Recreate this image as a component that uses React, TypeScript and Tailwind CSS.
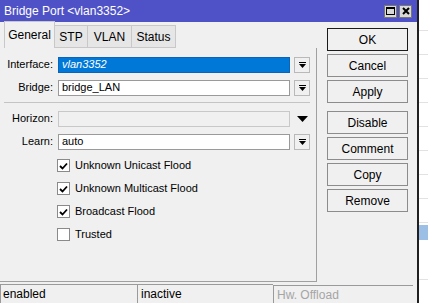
import React from 'react';

const font = { fontFamily: '"Liberation Sans", Arial, sans-serif' };

function DropBtn() {
	return (
		<div className="w-[16px] h-[16px] border border-[#b9b9b9] bg-[#f0f0f0] flex flex-col items-center justify-center">
			<div className="w-[7px] h-[1px] bg-black mb-[1px]" />
			<svg width="7" height="4" viewBox="0 0 7 4"><path d="M0 0h7L3.5 4z" fill="#000" /></svg>
		</div>
	);
}

function Field({label, value, selected, disabled, arrow = 'box'}: any) {
	return (
		<div className="flex items-center h-[17px]">
			<span className="w-[54px] text-right pr-[1px] shrink-0">{label}</span>
			<div
				className={
					'ml-[4px] w-[232px] h-[16px] border flex items-center px-[3px] ' +
					(selected
						? 'bg-[#0078d7] border-[#0a64b8] text-white italic'
						: disabled
						? 'bg-[#f0f0f0] border-[#c8c8c8]'
						: 'bg-white border-[#9a9a9a]')
				}>
				{value}
			</div>
			<div className="ml-[4px] w-[16px] flex justify-center">
				{arrow === 'box' ? (
					<DropBtn />
				) : (
					<svg width="11" height="6" viewBox="0 0 11 6"><path d="M0 0h11L5.5 6z" fill="#000" /></svg>
				)}
			</div>
		</div>
	);
}

function Check({label, checked}: any) {
	return (
		<div className="flex items-center h-[23px] pl-[57px]">
			<div className="w-[13px] h-[13px] border border-[#8a8a8a] bg-white flex items-center justify-center">
				{checked && (
					<svg width="9" height="8" viewBox="0 0 9 8"><path d="M1 4l2.5 2.5L8 1.5" stroke="#000" strokeWidth="1.8" fill="none" /></svg>
				)}
			</div>
			<span className="ml-[5px]">{label}</span>
		</div>
	);
}

function Btn({children, def}: any) {
	return (
		<div
			className={
				'w-[81px] h-[23px] flex items-center justify-center bg-[#f0f0f0] ' +
				(def ? 'border border-[#1a1a1a]' : 'border border-[#8c8c8c]')
			}>
			{children}
		</div>
	);
}

export default function App() {
	return (
		<div className="w-[428px] h-[303px] flex bg-white text-[11px] text-black overflow-hidden" style={font}>
			<div className="w-[417px] shrink-0 flex flex-col bg-[#f0f0f0]">
				{/* title */}
				<div className="h-[22px] bg-[#4f52c6] flex items-center pl-[4px] pr-[5px] shrink-0">
					<span className="text-white text-[12px] flex-1">Bridge Port &lt;vlan3352&gt;</span>
					<div className="w-[13px] h-[13px] bg-[#d9d9d9] border border-[#777] flex items-center justify-center mr-[2px]">
						<div className="w-[9px] h-[8px] border border-black border-t-2" />
					</div>
					<div className="w-[13px] h-[13px] bg-[#d9d9d9] border border-[#777] flex items-center justify-center">
						<svg width="8" height="8" viewBox="0 0 8 8"><path d="M1 1l6 6M7 1L1 7" stroke="#000" strokeWidth="2" /></svg>
					</div>
				</div>
				<div className="flex flex-1">
					{/* left */}
					<div className="w-[317px] flex flex-col">
						<div className="flex items-end h-[26px] pl-[4px]">
							<div className="w-[51px] h-[27px] flex items-center justify-center bg-[#f0f0f0] border border-b-0 border-[#c8c8c8] text-[12px]">General</div>
							<div className="w-[33px] h-[23px] flex items-center justify-center bg-[#e6e6e6] border border-l-0 border-[#c8c8c8] text-[12px]">STP</div>
							<div className="w-[44px] h-[23px] flex items-center justify-center bg-[#e6e6e6] border border-l-0 border-[#c8c8c8] text-[12px]">VLAN</div>
							<div className="w-[44px] h-[23px] flex items-center justify-center bg-[#e6e6e6] border border-l-0 border-[#c8c8c8] text-[12px]">Status</div>
						</div>
						<div className="flex-1 border-r border-b border-[#a0a0a0] flex flex-col pt-[8px]">
							<div className="flex flex-col gap-[6px]">
								<Field label="Interface:" value="vlan3352" selected />
								<Field label="Bridge:" value="bridge_LAN" />
							</div>
							<div className="h-[1px] bg-[#c4c4c4] mx-[4px] mr-[6px] mt-[6px] mb-[7px]" />
							<div className="flex flex-col gap-[6px]">
								<Field label="Horizon:" value="" disabled arrow="tri" />
								<Field label="Learn:" value="auto" />
							</div>
							<div className="flex flex-col mt-[4px]">
								<Check label="Unknown Unicast Flood" checked />
								<Check label="Unknown Multicast Flood" checked />
								<Check label="Broadcast Flood" checked />
								<Check label="Trusted" />
							</div>
						</div>
					</div>
					{/* buttons */}
					<div className="flex-1 flex flex-col pl-[10px] pt-[6px] text-[12px]">
						<Btn def>OK</Btn>
						<div className="mt-[3px] flex flex-col gap-[3px]">
							<Btn>Cancel</Btn>
							<Btn>Apply</Btn>
						</div>
						<div className="mt-[8px] flex flex-col gap-[3px]">
							<Btn>Disable</Btn>
							<Btn>Comment</Btn>
							<Btn>Copy</Btn>
							<Btn>Remove</Btn>
						</div>
					</div>
				</div>
				{/* status bar */}
				<div className="h-[21px] flex items-stretch pt-[2px] shrink-0 text-[12px]">
					<div className="w-[137px] border-t border-l border-[#9a9a9a] pl-[2px] flex items-center">enabled</div>
					<div className="w-[136px] border-t border-l border-[#9a9a9a] pl-[3px] flex items-center">inactive</div>
					<div className="w-[140px] border-t border-l border-[#9a9a9a] pl-[3px] flex items-center text-[#a5a5a5] mt-[1px]">Hw. Offload</div>
				</div>
			</div>
			<div className="w-[2px] bg-[#202020] shrink-0" />
			<div className="flex-1 flex flex-col">
				<div className="h-[31px] border-b border-[#e2e2e2]" />
				<div className="h-[24px] border-b border-[#e2e2e2]" />
				<div className="h-[24px] border-b border-[#e2e2e2]" />
				<div className="h-[24px] border-b border-[#e2e2e2]" />
				<div className="h-[24px] border-b border-[#e2e2e2]" />
				<div className="h-[24px] border-b border-[#e2e2e2]" />
				<div className="h-[24px] border-b border-[#e2e2e2]" />
				<div className="h-[24px] border-b border-[#e2e2e2]" />
				<div className="h-[24px] border-b border-[#e2e2e2]" />
				<div className="h-[2px]" />
				<div className="h-[15px] bg-[#9cbfe6]" />
				<div className="h-[40px] border-b border-[#e2e2e2]" />
			</div>
		</div>
	);
}
